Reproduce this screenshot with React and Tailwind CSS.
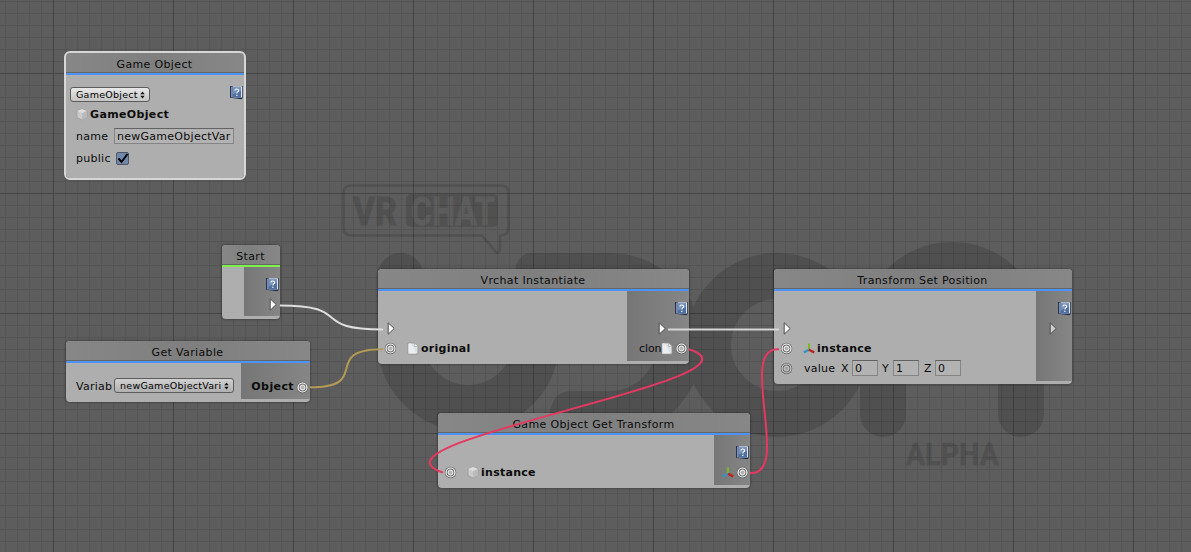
import React from "react";

function Help() {
  return (
    <svg className="block shrink-0" width="14" height="15" viewBox="0 0 14 15">
      <path d="M1 1H13.600V13L12.600 14.300L1 12.800Z" fill="#1d2c4c" />
      <path d="M2.400 1.500V12.500" stroke="#93a3bf" strokeWidth="0.900" />
      <path d="M3.500 1.300H13V12.600H3.500Z" fill="#dbe2ec" />
      <path d="M3.500 2.500H12V12.600H3.500Z" fill="#50709f" />
      <path d="M3.500 2.500H12V6L3.500 9.500Z" fill="#7590b8" />
      <path d="M6 5.400C6 3.500 9.600 3.500 9.600 5.400C9.600 6.900 7.800 6.800 7.800 8.500M7.800 9.700V10.900" stroke="#f4f7fb" strokeWidth="1.200" fill="none" />
    </svg>
  );
}

function Port({ dim }) {
  const c = dim ? "#d0d0d0" : "#ffffff";
  return (
    <svg className="block shrink-0" width="13" height="13" viewBox="0 0 13 13">
      <circle cx="6.500" cy="6.500" r="5.700" fill="#5a5a5a" />
      <circle cx="6.500" cy="6.500" r="4.500" fill="#6c6c6c" stroke={c} strokeWidth="1.200" />
      <circle cx="6.500" cy="6.500" r="2.500" fill={dim ? "#a4a4a4" : "#b4b4b4"} stroke={c} strokeWidth="0.900" />
    </svg>
  );
}

function Arrow({ dim }) {
  return (
    <svg className="block shrink-0" width="8" height="13" viewBox="0 0 8 13">
      <path d="M1.200 0.800V12.200L7.200 6.500Z" fill={dim ? "#cfcfcf" : "#fff"} stroke="#4c4c4c" strokeWidth="1" />
    </svg>
  );
}

function Cube() {
  return (
    <svg className="block shrink-0" width="12" height="13" viewBox="0 0 12 13">
      <path d="M6 1L11 3V9.500L6 12L1 9.500V3Z" fill="#cbcbcb" stroke="#959595" strokeWidth="0.700" />
      <path d="M6 1L11 3L6 5.200L1 3Z" fill="#dedede" />
      <path d="M6 5.200L11 3V9.500L6 12Z" fill="#bababa" />
    </svg>
  );
}

function Page() {
  return (
    <svg className="block shrink-0" width="12" height="13" viewBox="0 0 12 13">
      <path d="M1 1H7.500L11 4.500V12H1Z" fill="#dde1e4" stroke="#909090" strokeWidth="0.800" />
      <path d="M1.500 1.500H4L9 11.500H1.500Z" fill="#ebeef0" />
      <path d="M7.500 1V4.500H11Z" fill="#f8f8f8" stroke="#a5a5a5" strokeWidth="0.600" />
    </svg>
  );
}

function Axes() {
  return (
    <svg className="block shrink-0" width="12" height="12" viewBox="0 0 12 12">
      <path d="M6 0.500V7" stroke="#7fb52a" strokeWidth="2.200" />
      <path d="M6 6.800L0.800 9.400" stroke="#3a93c4" strokeWidth="2.400" />
      <path d="M6 6.800L11.200 9.400" stroke="#c01f1f" strokeWidth="2.400" />
    </svg>
  );
}

function Dropdown({ children, className }) {
  return (
    <div className={"flex h-[15px] shrink-0 items-center justify-between rounded-[3px] border border-[#5c5c5c] pr-[4px] pl-[5px] text-[9.5px] leading-[13px] tracking-[0.26px] whitespace-nowrap text-black " + className}>
      <span>{children}</span>
      <svg className="block shrink-0" width="5" height="8" viewBox="0 0 5 8">
        <path d="M2.500 0.500L4.700 3.200H0.300ZM2.500 7.500L4.700 4.800H0.300Z" fill="#111" />
      </svg>
    </div>
  );
}

function Field({ children, className }) {
  return (
    <div className={"h-[16px] shrink-0 overflow-hidden border border-[#858585] border-t-[#626262] bg-[#b3b3b3] pl-[2px] leading-[15px] whitespace-nowrap " + className}>
      {children}
    </div>
  );
}

function Node({ title, className, accent = "bg-[#4c93f5]", side, children }) {
  return (
    <section className={"absolute flex flex-col overflow-hidden rounded-[4px] bg-[#aeaeae] shadow-[0_0_3px_#0007] " + className}>
      <header className="h-[19px] shrink-0 bg-linear-to-r from-[#878787] via-[#7f7f7f] to-[#878787] pr-px text-center leading-[23px] tracking-[0.35px]">{title}</header>
      <div className="h-px shrink-0 bg-[#666]" />
      <div className={"h-[2px] shrink-0 " + accent} />
      <div className="flex min-h-0 flex-1">
        <div className="flex min-w-0 flex-1 flex-col">{children}</div>
        {side}
      </div>
    </section>
  );
}

function Side({ className, children }) {
  return (
    <div className={"mb-[3px] flex shrink-0 flex-col items-end bg-linear-to-r from-[#767676] to-[#868686] " + className}>{children}</div>
  );
}

function Watermark() {
  return (
    <svg className="absolute inset-0" width="1191" height="552" viewBox="0 0 1191 552">
      <g fill="none" stroke="#505050" strokeWidth="46">
        <path d="M400.500 276V346A68 68 0 0 0 536 346V300" />
        <path d="M400.500 276V300" strokeLinecap="round" />
        <path d="M572 414H610A69 69 0 0 0 610 276H538" />
        <circle cx="777" cy="345" r="69" />
        <path d="M883 414V334A69 69 0 0 1 1021 334V414" strokeLinecap="round" />
      </g>
      <path d="M515 300V271Q517 253 533 253H560V300Z" fill="#505050" />
      <path d="M549 437V418Q551 391 572 391V437Z" fill="#505050" />
      <path d="M351 185.500H501Q508.500 185.500 508.500 193V228Q508.500 235 501 235.500H500V249Q499 254.500 496 252L482 235.500H351Q343.500 235 343.500 228V193Q343.500 185.500 351 185.500Z" fill="none" stroke="#515151" strokeWidth="2.600" />
      <rect x="406" y="194" width="92" height="33" rx="5" fill="#515151" />
      <g fontFamily="Roboto, sans-serif" fontWeight="700" strokeLinejoin="round">
        <text x="353" y="224.500" fontSize="39" textLength="44" lengthAdjust="spacingAndGlyphs" fill="#515151" stroke="#515151">VR</text>
        <text x="411" y="224.500" fontSize="39" textLength="84" lengthAdjust="spacingAndGlyphs" fill="#5d5d5d" stroke="#5d5d5d">CHAT</text>
        <text x="906" y="465" fontSize="32" textLength="93" lengthAdjust="spacingAndGlyphs" fill="#515151" stroke="#515151" strokeWidth="0.600">ALPHA</text>
      </g>
    </svg>
  );
}

function Grid() {
  return (
    <svg className="absolute inset-0" width="1191" height="552">
      <defs>
        <pattern id="minor" x="5" y="1" width="12" height="12" patternUnits="userSpaceOnUse">
          <path d="M0 0H12V1H1V12H0Z" fill="#000" fillOpacity="0.1" />
        </pattern>
        <pattern id="major" x="53" y="73" width="120" height="120" patternUnits="userSpaceOnUse">
          <path d="M0 0H120V1H1V120H0Z" fill="#000" fillOpacity="0.18" />
        </pattern>
      </defs>
      <rect width="1191" height="552" fill="url(#minor)" />
      <rect width="1191" height="552" fill="url(#major)" />
    </svg>
  );
}

function Wires() {
  return (
    <svg className="pointer-events-none absolute inset-0" width="1191" height="552" fill="none" strokeWidth="2">
      <path d="M280 305.500C355 305.500 308 329.500 383 329.500" stroke="#dedede" />
      <path d="M668 329.500H779" stroke="#d6d6d6" strokeWidth="2.200" />
      <path d="M310 387.300C374 387.300 319 349.300 383 349.300" stroke="#b39b55" />
      <path d="M689 349.300C782 379 350 442 443 472.500" stroke="#e53961" />
      <path d="M750 473C793 476 736 346 779 349.300" stroke="#e53961" />
    </svg>
  );
}

export default function App() {
  return (
    <main className="relative h-[552px] w-[1191px] overflow-hidden bg-[#5d5d5d] font-['DejaVu_Sans',sans-serif] text-[11px] leading-[14px] tracking-[0.27px] text-[#0c0c0c]">
      <Watermark />
      <Grid />

      <Node title="Game Object" className="top-[53px] left-[66px] h-[125px] w-[178px] outline-2 outline-[#d6d6d6]">
        <div className="flex items-start justify-between pt-[10px] pr-px pl-[4px]">
          <Dropdown className="mt-[2px] w-[80px] bg-linear-to-b from-[#e8e8e8] to-[#c4c4c4]">GameObject</Dropdown>
          <Help />
        </div>
        <div className="mt-[5px] flex h-[14px] items-center gap-[2px] pl-[10px] font-bold tracking-[0.35px]"><Cube /><span className="pt-[2px]">GameObject</span></div>
        <div className="mt-[7px] flex h-[16px] items-center pl-[10px]"><span className="w-[38px] pt-px">name</span><Field className="w-[120px]">newGameObjectVar</Field></div>
        <div className="mt-[7px] flex h-[14px] items-center pl-[10px]">
          <span className="w-[40px] pt-px">public</span>
          <svg className="block" width="13" height="13" viewBox="0 0 13 13">
            <rect x="0.500" y="0.500" width="12" height="12" rx="1.500" fill="#7089ab" stroke="#4d5664" />
            <path d="M2.500 6.500L5.500 10L11.500 2" fill="none" stroke="#000" strokeWidth="2" />
          </svg>
        </div>
      </Node>

      <Node title="Start" accent="bg-[#7ff04a]" className="top-[245px] left-[222px] h-[74px] w-[58px]"
        side={<Side className="w-[36px] pt-[10px] pr-px"><Help /><div className="mt-[6px] mr-[2px]"><Arrow /></div></Side>} />

      <Node title="Get Variable" className="top-[341px] left-[66px] h-[61px] w-[244px]"
        side={<Side className="w-[69px] pt-[17px] pr-px"><div className="flex items-center gap-[2px] font-bold tracking-[0.4px]">Object<Port /></div></Side>}>
        <div className="mt-[15px] flex h-[15px] items-center pl-[10px]"><span className="w-[38px] shrink-0 pt-[2px]">Variab</span><Dropdown className="w-[120px] bg-linear-to-b from-[#d0d0d0] to-[#b0b0b0]">newGameObjectVari</Dropdown></div>
      </Node>

      <Node title="Vrchat Instantiate" className="top-[269px] left-[378px] h-[95px] w-[311px]"
        side={<Side className="w-[62px] pt-[10px] pr-px"><Help /><div className="mt-[6px] mr-[22px]"><Arrow /></div>
          <div className="mt-[7px] flex h-[13px] items-center"><span className="w-[22px] whitespace-nowrap tracking-[-0.1px]">clon</span><Page /><span className="w-[2px]" /><Port /></div></Side>}>
        <div className="mt-[31px] pl-[9px]"><Arrow /></div>
        <div className="mt-[7px] flex h-[13px] items-center pl-[6px] font-bold"><Port /><span className="w-[10px]" /><Page /><span className="ml-[2px]">original</span></div>
      </Node>

      <Node title="Transform Set Position" className="top-[269px] left-[774px] h-[115px] w-[298px]"
        side={<Side className="w-[36px] pt-[10px] pr-px"><Help /><div className="mt-[6px] mr-[14px]"><Arrow dim /></div></Side>}>
        <div className="mt-[31px] pl-[9px]"><Arrow /></div>
        <div className="mt-[7px] flex h-[13px] items-center pl-[6px] font-bold"><Port /><span className="w-[10px]" /><Axes /><span className="ml-[2px]">instance</span></div>
        <div className="mt-[5px] flex h-[16px] items-center pl-[6px]">
          <Port dim /><span className="ml-[11px] w-[37px] pt-px">value</span>
          <span className="w-[11px] pt-px">X</span><Field className="w-[26px]">0</Field>
          <span className="ml-[4px] w-[11px] pt-px">Y</span><Field className="w-[26px]">1</Field>
          <span className="ml-[5px] w-[11px] pt-px">Z</span><Field className="w-[26px]">0</Field>
        </div>
      </Node>

      <Node title="Game Object Get Transform" className="top-[413px] left-[438px] h-[75px] w-[312px]"
        side={<Side className="w-[36px] pt-[10px] pr-px"><Help /><div className="mt-[6px] flex items-center gap-[2px]"><Axes /><Port /></div></Side>}>
        <div className="mt-[31px] flex h-[13px] items-center pl-[6px] font-bold"><Port /><span className="w-[10px]" /><Cube /><span className="ml-[2px]">instance</span></div>
      </Node>

      <Wires />
    </main>
  );
}
